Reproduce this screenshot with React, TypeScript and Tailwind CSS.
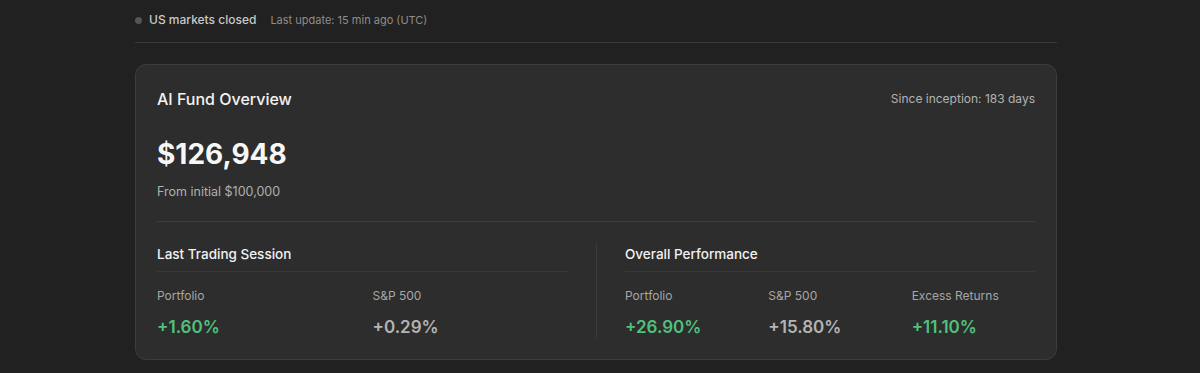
import React from "react";

const Stat = ({ label, value, green }: { label: string; value: string; green?: boolean }) => (
  <div className="flex flex-col">
    <div className="text-[12px] leading-5 text-[#a6a6a6]">{label}</div>
    <div
      className={
        "mt-[9px] text-[17px] leading-6 font-semibold " + (green ? "text-[#4fc17c]" : "text-[#b4b4b4]")
      }
    >
      {value}
    </div>
  </div>
);

export default function App() {
  return (
    <div
      className="min-h-screen w-full bg-[#212121]"
      style={{ fontFamily: "Inter, 'Noto Sans', sans-serif" }}
    >
      <div className="ml-[135px] w-[922px]">
        <div className="flex h-[43px] items-center border-b border-[#3a3a3a] pb-[2px]">
          <span className="h-[7px] w-[7px] rounded-full bg-[#555555]" />
          <span className="ml-[7px] text-[12px] font-medium text-[#c9c9c9]">US markets closed</span>
          <span className="ml-[14px] text-[11px] text-[#8d8d8d]">Last update: 15 min ago (UTC)</span>
        </div>

        <div className="mt-[21px] rounded-[11px] border border-[#3d3d3d] bg-[#2d2d2d] px-[21px] pt-[22px] pb-[20px]">
          <div className="flex items-center justify-between">
            <div className="text-[16px] leading-6 font-medium text-[#f2f2f2]">AI Fund Overview</div>
            <div className="text-[12px] leading-6 text-[#b3b3b3]">Since inception: 183 days</div>
          </div>
          <div className="mt-[25px] text-[28px] leading-9 font-bold text-[#f7f7f7]">$126,948</div>
          <div className="mt-[10px] text-[12.5px] leading-5 text-[#b0b0b0]">From initial $100,000</div>

          <div className="mt-[19px] border-t border-[#3d3d3d] pt-[21px]">
            <div className="grid grid-cols-2">
              <div className="pr-7">
                <div className="border-b border-[#383838] pb-[6px] text-[13.5px] leading-[22px] font-medium text-[#f2f2f2]">
                  Last Trading Session
                </div>
                <div className="mt-[14px] grid grid-cols-2 gap-5">
                  <Stat label="Portfolio" value="+1.60%" green />
                  <Stat label="S&P 500" value="+0.29%" />
                </div>
              </div>
              <div className="border-l border-[#3a3a3a] pl-7">
                <div className="border-b border-[#383838] pb-[6px] text-[13.5px] leading-[22px] font-medium text-[#f2f2f2]">
                  Overall Performance
                </div>
                <div className="mt-[14px] grid grid-cols-3 gap-5">
                  <Stat label="Portfolio" value="+26.90%" green />
                  <Stat label="S&P 500" value="+15.80%" />
                  <Stat label="Excess Returns" value="+11.10%" green />
                </div>
              </div>
            </div>
          </div>
        </div>
      </div>
    </div>
  );
}
